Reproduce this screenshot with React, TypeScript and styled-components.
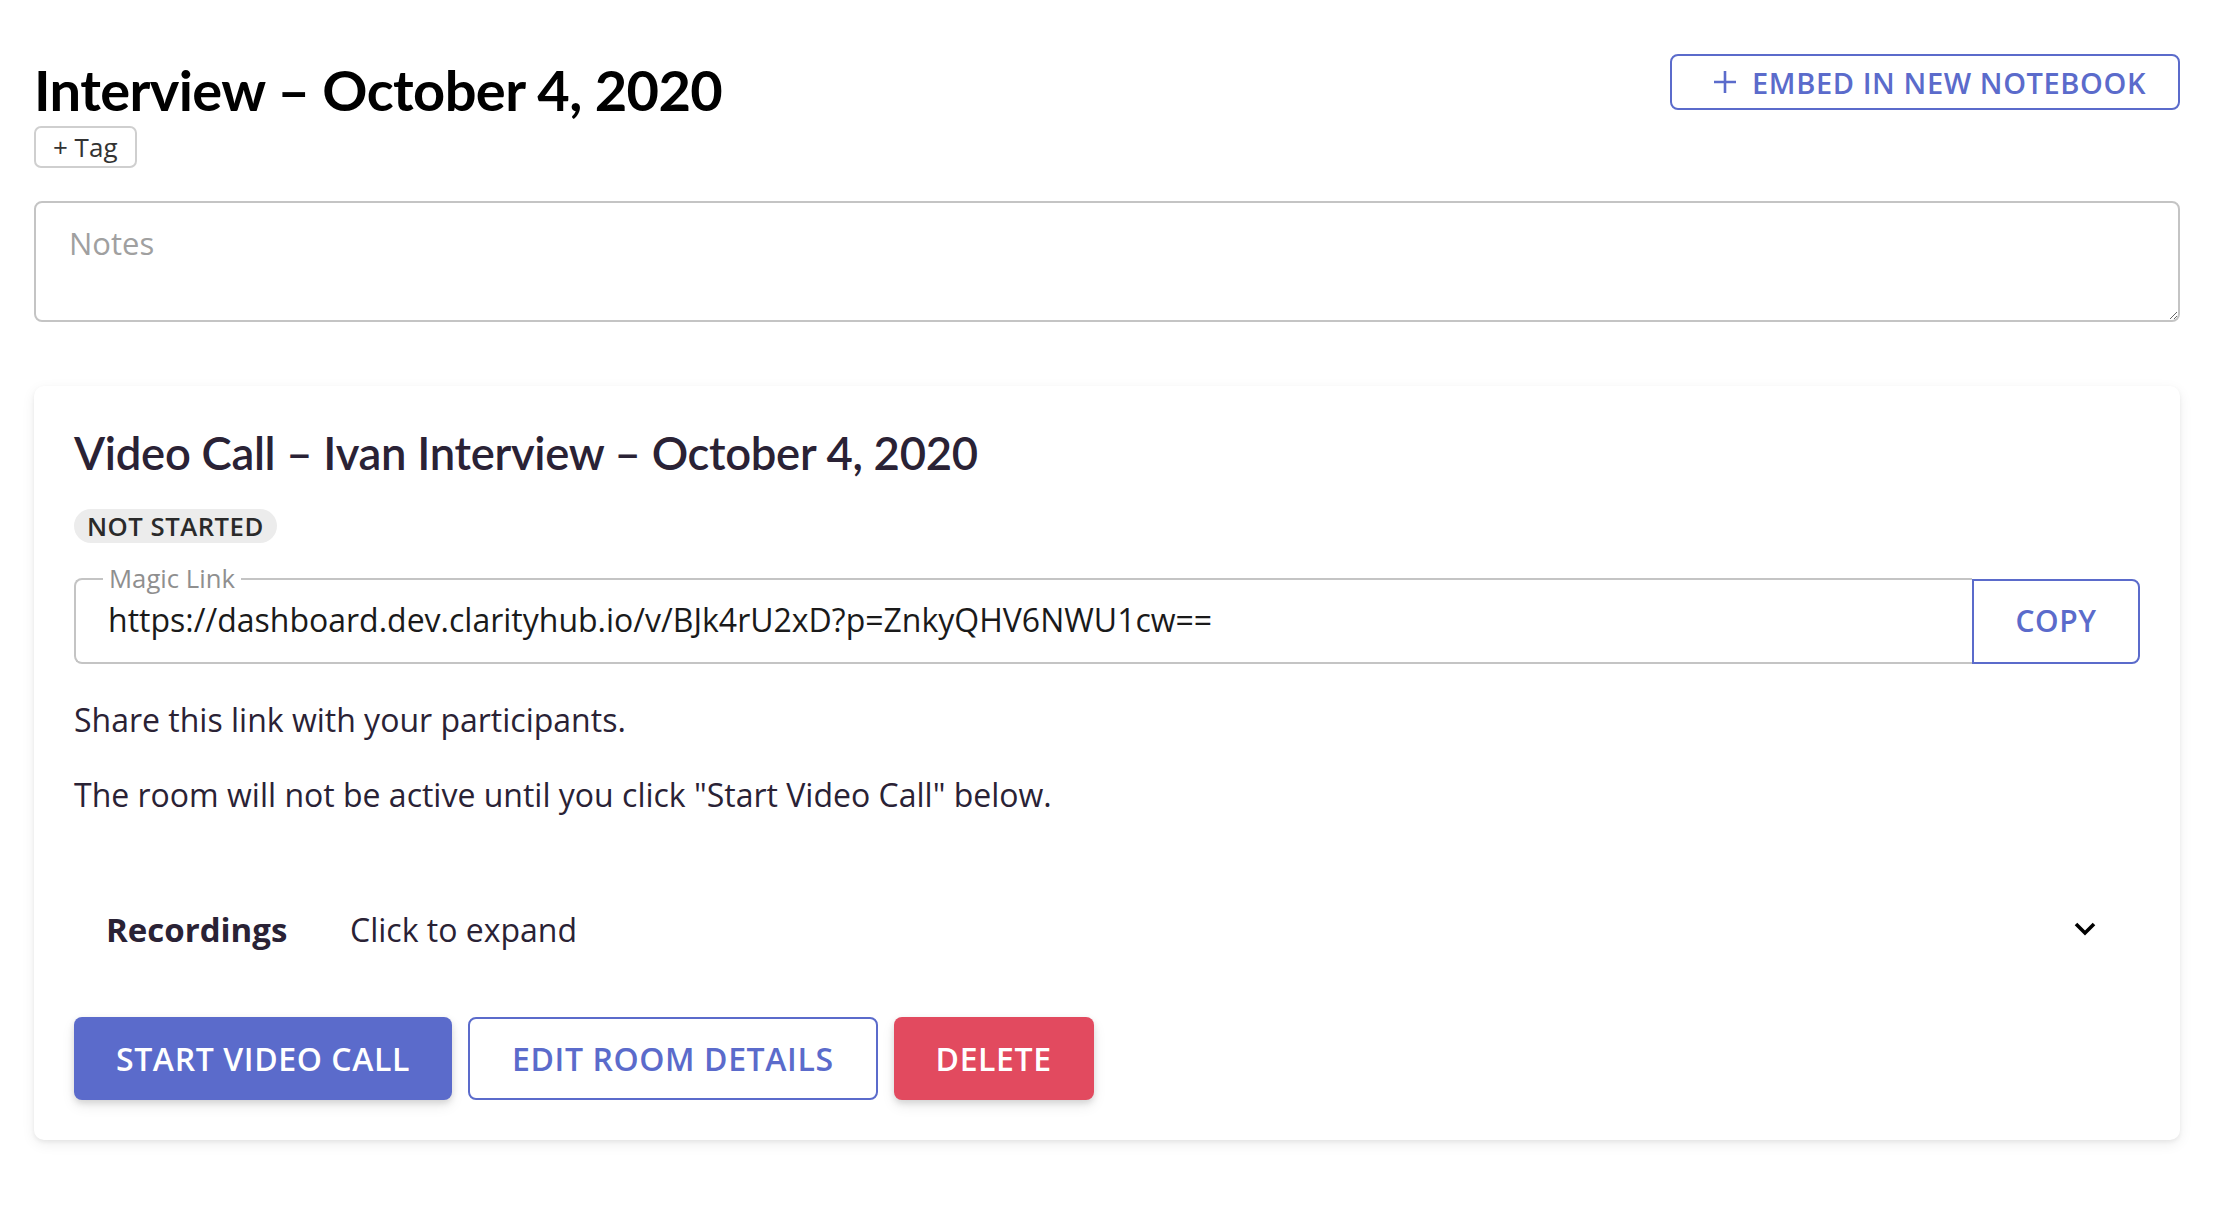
import React from "react";
import styled, { createGlobalStyle } from "styled-components";

const GlobalStyle = createGlobalStyle`
  html, body { margin: 0; padding: 0; background: #ffffff; }
  body { font-family: "Open Sans", "Noto Sans", sans-serif; color: #2a2235; }
  * { box-sizing: border-box; }
`;

const Page = styled.div`
  padding: 54px 40px 60px 34px;
  display: flex;
  flex-direction: column;
`;

const Header = styled.div`
  display: flex;
  justify-content: space-between;
  align-items: flex-start;
`;

const TitleBlock = styled.div`
  display: flex;
  flex-direction: column;
  align-items: flex-start;
`;

const PageTitle = styled.h1`
  margin: 0;
  font-family: "Lato", "Noto Sans", sans-serif;
  font-weight: 700;
  font-size: 56px;
  line-height: 72px;
  color: #000;
  letter-spacing: -0.6px;
`;

const TagButton = styled.button`
  margin-top: 0;
  height: 42px;
  padding: 0 17px;
  border: 2px solid #cfcfcf;
  border-radius: 7px;
  background: #fff;
  font-family: "Open Sans", sans-serif;
  font-size: 26px;
  color: #333;
  display: flex;
  align-items: center;
`;

const OutlineButton = styled.button<{ $h?: number; $pl?: number; $pr?: number }>`
  height: ${(p) => p.$h ?? 83}px;
  padding: 0 ${(p) => p.$pr ?? 42}px 0 ${(p) => p.$pl ?? 42}px;
  border: 2px solid #5b6bcb;
  border-radius: 8px;
  background: #fff;
  color: #5b6bcb;
  font-family: "Open Sans", sans-serif;
  font-weight: 600;
  font-size: 32px;
  letter-spacing: 0.6px;
  display: flex;
  align-items: center;
  gap: 14px;
  text-transform: uppercase;
`;

const EmbedButton = styled(OutlineButton)`
  font-size: 29px;
`;

const NotesArea = styled.textarea`
  margin-top: 33px;
  width: 100%;
  height: 121px;
  border: 2px solid #c4c4c4;
  border-radius: 8px;
  padding: 19px 33px;
  font-family: "Open Sans", sans-serif;
  font-size: 31px;
  color: #333;
  resize: vertical;
  outline: none;
  &::placeholder { color: #a0a0a0; }
`;

const Card = styled.section`
  margin-top: 64px;
  background: #fff;
  border-radius: 10px;
  box-shadow: 0 2px 4px rgba(0,0,0,0.06), 0 4px 14px rgba(0,0,0,0.07);
  padding: 34px 40px 40px 40px;
  display: flex;
  flex-direction: column;
  align-items: flex-start;
`;

const CardTitle = styled.h2`
  margin: 0;
  font-family: "Lato", "Noto Sans", sans-serif;
  font-weight: 600;
  font-size: 45.4px;
  line-height: 66px;
  color: #2a2235;
  letter-spacing: -0.3px;
`;

const StatusChip = styled.span`
  margin-top: 23px;
  height: 34px;
  padding: 0 13px;
  border-radius: 17px;
  background: #ececec;
  font-family: "Open Sans", sans-serif;
  font-weight: 600;
  font-size: 25.7px;
  letter-spacing: 0.5px;
  color: #2a2a2a;
  display: flex;
  align-items: center;
`;

const LinkRow = styled.div`
  margin-top: 36px;
  width: 100%;
  display: flex;
  align-items: stretch;
  height: 85px;
`;

const LinkField = styled.fieldset`
  flex: 1;
  margin: 0;
  min-width: 0;
  border: 2px solid #c4c4c4;
  border-right: none;
  border-radius: 8px 0 0 8px;
  padding: 0 32px;
  position: relative;
  top: -13px;
  height: 98px;
  display: flex;
  align-items: center;
`;

const LinkLegend = styled.legend`
  padding: 0 6px;
  margin-left: -5px;
  font-family: "Open Sans", sans-serif;
  font-size: 25.7px;
  line-height: 26px;
  color: #8f8f8f;
`;

const LinkText = styled.span`
  font-family: "Open Sans", sans-serif;
  font-size: 32px;
  color: #1a1a1a;
  white-space: nowrap;
  margin-top: -15px;
`;

const CopyButton = styled(OutlineButton)`
  height: 85px;
  width: 168px;
  justify-content: center;
  border-radius: 0 8px 8px 0;
  padding: 0 0 3px 0;
  font-size: 30px;
`;

const BodyText = styled.p<{ $top: number }>`
  margin: ${(p) => p.$top}px 0 0 0;
  font-family: "Open Sans", sans-serif;
  font-size: 32px;
  line-height: 44px;
  color: #2a2235;
`;

const RecordingsRow = styled.div`
  margin-top: 74px;
  width: 100%;
  display: flex;
  align-items: center;
  padding: 0 43px 0 32px;
  height: 76px;
`;

const RecLabel = styled.span`
  font-family: "Open Sans", sans-serif;
  font-weight: 700;
  font-size: 33px;
  color: #2a2235;
  width: 244px;
`;

const RecHint = styled.span`
  flex: 1;
  font-family: "Open Sans", sans-serif;
  font-size: 32px;
  color: #2a2235;
`;

const Actions = styled.div`
  margin-top: 50px;
  display: flex;
  gap: 16px;
`;

const SolidButton = styled.button<{ $bg: string }>`
  height: 83px;
  padding: 0 42px;
  border: none;
  border-radius: 8px;
  background: ${(p) => p.$bg};
  color: #fff;
  font-family: "Open Sans", sans-serif;
  font-weight: 600;
  font-size: 32px;
  letter-spacing: 0.6px;
  box-shadow: 0 3px 6px rgba(0,0,0,0.12), 0 6px 14px rgba(0,0,0,0.08);
  text-transform: uppercase;
`;

const Plus = () => (
  <svg width="26" height="26" viewBox="0 0 26 26" fill="none">
    <path d="M13 2v22M2 13h22" stroke="#5b6bcb" strokeWidth="2.6" />
  </svg>
);

const Chevron = () => (
  <svg width="24" height="24" viewBox="0 0 24 24" fill="none">
    <path d="M3 7l9 9 9-9" stroke="#000" strokeWidth="3.6" />
  </svg>
);

export default function App() {
  return (
    <>
      <GlobalStyle />
      <Page>
        <Header>
          <TitleBlock>
            <PageTitle>Interview – October 4, 2020</PageTitle>
            <TagButton>+ Tag</TagButton>
          </TitleBlock>
          <EmbedButton $h={56} $pl={40} $pr={32}>
            <Plus />
            Embed in new notebook
          </EmbedButton>
        </Header>
        <NotesArea placeholder="Notes" />
        <Card>
          <CardTitle>Video Call – Ivan Interview – October 4, 2020</CardTitle>
          <StatusChip>NOT STARTED</StatusChip>
          <LinkRow>
            <LinkField>
              <LinkLegend>Magic Link</LinkLegend>
              <LinkText>https://dashboard.dev.clarityhub.io/v/BJk4rU2xD?p=ZnkyQHV6NWU1cw==</LinkText>
            </LinkField>
            <CopyButton>Copy</CopyButton>
          </LinkRow>
          <BodyText $top={34}>Share this link with your participants.</BodyText>
          <BodyText $top={31}>The room will not be active until you click "Start Video Call" below.</BodyText>
          <RecordingsRow>
            <RecLabel>Recordings</RecLabel>
            <RecHint>Click to expand</RecHint>
            <Chevron />
          </RecordingsRow>
          <Actions>
            <SolidButton $bg="#5b6bcb">Start Video Call</SolidButton>
            <OutlineButton>Edit Room Details</OutlineButton>
            <SolidButton $bg="#e24a5f">Delete</SolidButton>
          </Actions>
        </Card>
      </Page>
    </>
  );
}
